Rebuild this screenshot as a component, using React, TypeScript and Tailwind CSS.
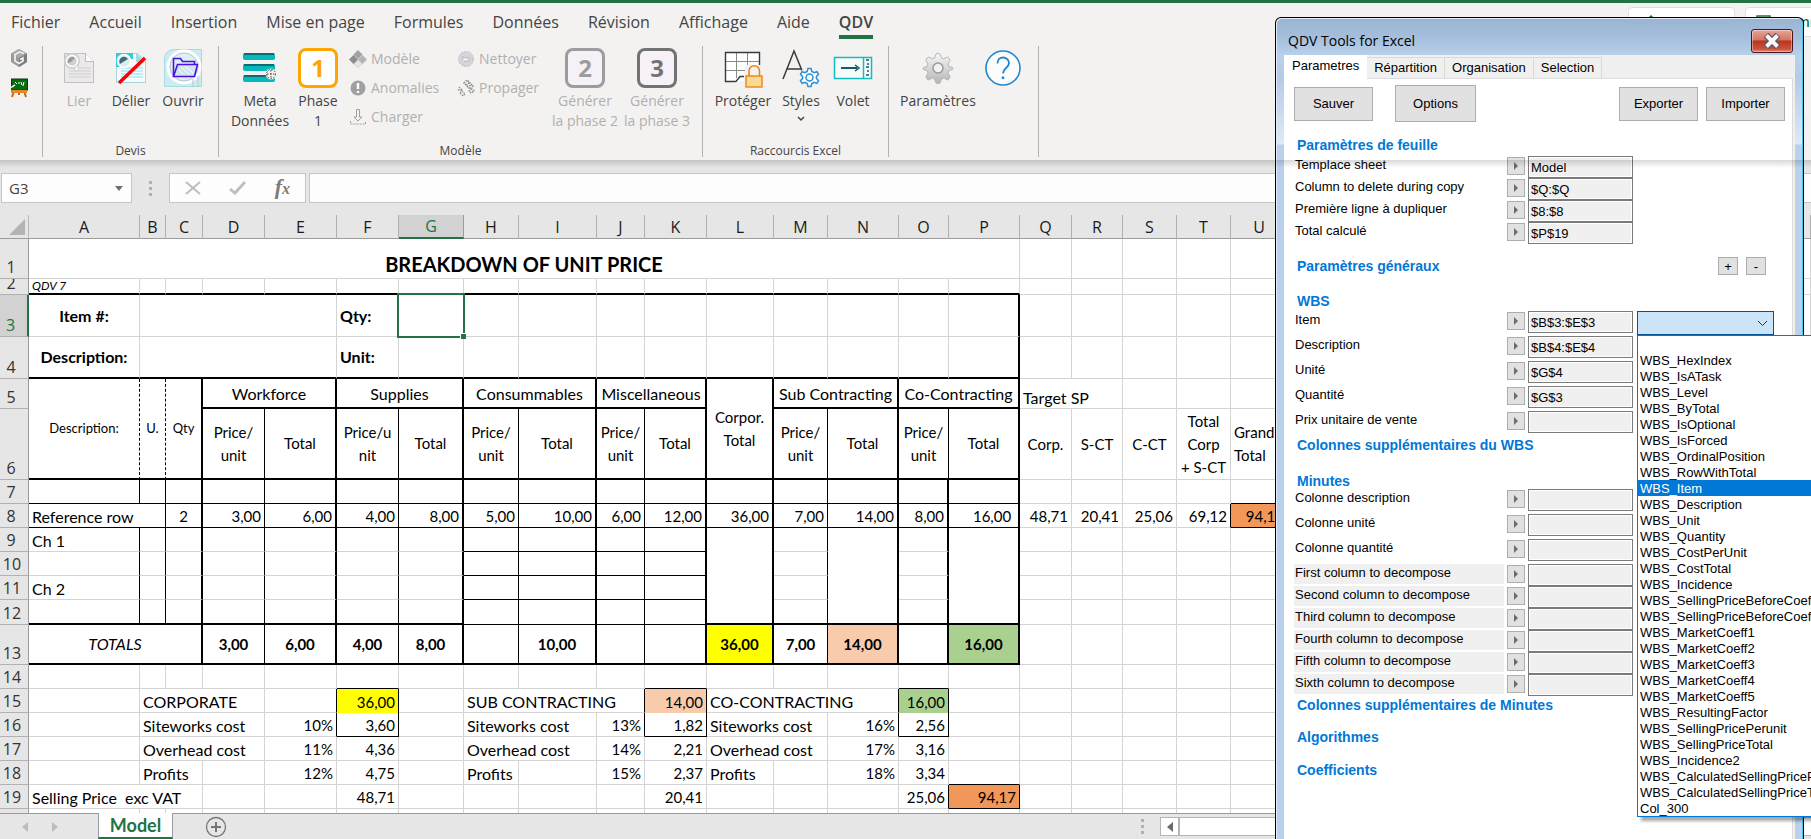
import { useState, type ReactNode } from "react";

/* ---------- icons ---------- */

function CubeIcon() {
  return (
    <svg width="18" height="20" viewBox="0 0 18 20">
      <path d="M9 1l8 4.500v8.500l-8 5-8-5V5.500z" fill="#999999" />
      <path d="M9 1l8 4.500-8 4.500-8-4.500z" fill="#a9a9a9" />
      <path d="M9 10l8-4.500v8.500l-8 5z" fill="#7c7c7c" />
      <path d="M14 5.500L9.500 4 5 6.500v6.500l4 2.500 4-2.500v-3l-3 1.500" fill="none" stroke="#ececec" strokeWidth="1.800" />
    </svg>
  );
}

function BoardIcon() {
  return (
    <svg width="18" height="20" viewBox="0 0 18 20">
      <path d="M4 13l-2 6M14 13l2 6M9 13v4" stroke="#c46a12" strokeWidth="2" />
      <rect x="1.500" y="1" width="16" height="11" fill="#0b6b12" stroke="#053d08" />
      <path d="M5 4l2 2M8 5h2M11 4l1 3M14 4l-1 4" stroke="#fff" strokeWidth="1" />
      <path d="M0 10l5-3" stroke="#e8e8e8" strokeWidth="1.500" />
      <rect x="1" y="12" width="16" height="3" fill="#e28a2b" />
    </svg>
  );
}

function DocIcon({ color, dark, paper }: { color: string; dark: string; paper: string }) {
  return (
    <svg width="34" height="34" viewBox="0 0 34 34">
      <path d="M2.500 2.500h21l8 8v21h-29z" fill={paper} stroke={dark} strokeOpacity=".55" />
      <path d="M23.500 2.500v8h8" fill="#fff" stroke={dark} strokeOpacity=".6" />
      <path d="M7 17h22M7 20h22M7 23h22M7 26h22" stroke={color} strokeWidth="1" />
      <circle cx="10" cy="10" r="8" fill={color} />
      <circle cx="10" cy="10" r="5.500" fill="none" stroke="#fff" strokeWidth="1.500" />
      <path d="M6 12a4.500 4.500 0 0 1 7-5l-4 4z" fill={dark} />
      <path d="M13 15h3v5h-3z" fill="#fff" stroke={color} />
    </svg>
  );
}

function UnlinkIcon() {
  return (
    <svg width="34" height="34" viewBox="0 0 34 34">
      <path d="M2.500 2.500h21l8 8v21h-29z" fill="#f6fbfc" stroke="#a9d4dc" />
      <path d="M2 2h17v6h-6v8H2z" fill="#35cbd9" />
      <path d="M22 2l9 9h-9z" fill="#9fdbe3" />
      <path d="M7 17h22M7 20h22M7 23h22M7 26h22" stroke="#8fdde6" />
      <circle cx="10" cy="10" r="6.500" fill="#d7eef2" stroke="#fff" strokeWidth="1.500" />
      <path d="M6 13a4.500 4.500 0 0 1 8-5l-5 3z" fill="#3d6d78" />
      <path d="M5 32L31 7" stroke="#fb0007" strokeWidth="3.500" />
    </svg>
  );
}

function OpenIcon() {
  return (
    <svg width="40" height="40" viewBox="0 0 40 40">
      <path d="M1.500 10a9 9 0 0 1 9-8.500h28v37h-37z" fill="#cdecef" stroke="#a5dbe1" />
      <circle cx="21" cy="19" r="16" fill="#dfeff3" stroke="#fff" strokeWidth="3" />
      <circle cx="21" cy="19" r="14" fill="none" stroke="#b9c6cf" />
      <path d="M30 31v8M35 28v11" stroke="#b9c6cf" />
      <path d="M10.500 28.500V10.500h7l2 3h12v3" fill="none" stroke="#4a10e8" strokeWidth="1.600" />
      <path d="M10.500 28.500l4-12h20l-3 12z" fill="#cfe5ee" stroke="#4a10e8" strokeWidth="1.600" />
      <path d="M18 19l8 7M22 18l8 7M15 21l5 5" stroke="#fff" />
    </svg>
  );
}

function MetaIcon() {
  return (
    <svg width="36" height="32" viewBox="0 0 36 32">
      {[1, 12, 23].map((y) => (
        <g key={y}>
          <rect x="1" y={y} width="32" height="7" rx="2" fill="#05b8bb" />
          <path d={`M2 ${y + 1}h30`} stroke="#0b6c73" strokeWidth="2" />
        </g>
      ))}
      <circle cx="29" cy="22" r="5.500" fill="#f3f2f1" />
      <circle cx="29" cy="22" r="4.500" fill="none" stroke="#444" strokeDasharray="1.500 1.500" />
      <path d="M25 22h9M29 18v9" stroke="#444" strokeDasharray="1.500 1.500" />
    </svg>
  );
}

function ModelIcon() {
  return (
    <svg width="18" height="18" viewBox="0 0 18 18">
      <path d="M9 0l4.500 4.500L9 9 4.500 4.500z" fill="#a2a2a2" />
      <path d="M4.500 5L9 9.500 4.500 14 0 9.500z" fill="#8d8d8d" />
      <path d="M13.500 5L18 9.500 13.500 14 9 9.500z" fill="#b4b4b4" />
      <path d="M9 10l4 4-4 3.500L5 14z" fill="#e6e6e6" stroke="#bbb" strokeWidth=".5" />
    </svg>
  );
}

function AlertIcon() {
  return (
    <svg width="18" height="18" viewBox="0 0 18 18">
      <circle cx="9" cy="9" r="7.500" fill="#a0a0a0" />
      <path d="M9 4v6M9 12v2" stroke="#fff" strokeWidth="2.400" />
    </svg>
  );
}

function LoadIcon() {
  return (
    <svg width="18" height="18" viewBox="0 0 18 18" fill="none" stroke="#a0a0a0">
      <path d="M7.500 1.500h3V9h2.500l-4 4-4-4h2.500z" />
      <path d="M1.500 13v3h15v-3" strokeDasharray="2 1" />
    </svg>
  );
}

function CleanIcon() {
  return (
    <svg width="18" height="18" viewBox="0 0 18 18">
      <circle cx="9" cy="9" r="7.500" fill="#d8d3da" stroke="#c4bfc6" strokeDasharray="2 1" />
      <path d="M6 10V6.500l2 1.500h4v3H7" fill="#f5f3f6" stroke="#aaa" strokeWidth=".7" />
    </svg>
  );
}

function SpreadIcon() {
  return (
    <svg width="18" height="18" viewBox="0 0 18 18" fill="none" stroke="#8c8c8c" strokeDasharray="1.500 1">
      <path d="M7 4l3-3 6 6-3 3z M9 6l4-3M10 8l4-2" strokeWidth="1.500" />
      <path d="M1 11h5M2 8l3 3M3 14l2-2 3 3-2 2z M12 12l3-2 2 2-3 2z" strokeWidth="1.300" />
    </svg>
  );
}

function NumberIcon({ value, look }: { value: string; look: string }) {
  return (
    <span
      className={`flex h-10 w-10 items-center justify-center rounded-lg border-[3px] font-['Open_Sans',sans-serif] text-2xl leading-none font-bold ${look}`}
    >
      {value}
    </span>
  );
}

function ProtectIcon() {
  return (
    <svg width="40" height="40" viewBox="0 0 40 40">
      <path d="M2.500 4.500h34v28h-17l-5 2-2 .500-4-1h-6z" fill="#fff" />
      <path d="M2 13.500h34M2 22.500h34M13.500 4v26M24.500 4v26" stroke="#8a8a8a" />
      <path d="M36.500 20V4.500h-34v29H13l4-5h6" fill="none" stroke="#3b3b3b" strokeWidth="1.400" />
      <path d="M23 17h16v22H21V27z" fill="#f3f2f1" />
      <path d="M26 28v-5a5 5 0 0 1 10.500 0v5" fill="none" stroke="#e8851a" strokeWidth="1.600" />
      <rect x="23" y="28" width="16" height="11" fill="#f9d98f" stroke="#e8851a" strokeWidth="1.400" />
    </svg>
  );
}

const gearPath =
  "M8.500 1h3l.8 2.900 2.200 1.200 2.900-.9 1.600 2.700-2.100 2.100v2l2.100 2.100-1.600 2.700-2.900-.9-2.200 1.200-.8 2.900h-3l-.8-2.900-2.200-1.200-2.900.9L1 13.100 3.100 11V9L1 6.900l1.600-2.700 2.900.9 2.200-1.200z";

function StylesIcon() {
  return (
    <svg width="40" height="40" viewBox="0 0 40 40">
      <path d="M2 31L13 3l9 22M6 21h14" fill="none" stroke="#3b3b3b" strokeWidth="1.500" />
      <circle cx="28.500" cy="29.500" r="10.500" fill="#f3f2f1" />
      <path transform="translate(18.500 19.500)" d={gearPath} fill="#fff" stroke="#2b8fd6" strokeWidth="1.500" />
      <circle cx="28.500" cy="29.500" r="3.500" fill="#fff" stroke="#2b8fd6" strokeWidth="1.500" />
    </svg>
  );
}

function PaneIcon() {
  return (
    <svg width="40" height="24" viewBox="0 0 40 24" fill="none">
      <rect x="1.500" y="1.500" width="37" height="21" fill="#f7fbfb" stroke="#12bdbd" strokeWidth="1.500" />
      <path d="M30.500 1v22" stroke="#12bdbd" strokeWidth="1.500" />
      <path d="M8 12h16" stroke="#155a66" strokeWidth="2" />
      <path d="M22 9l4 3-4 3" stroke="#155a66" strokeWidth="1.500" />
      <path d="M33 4h3M34 8h2M33 11h3M34 15h2M33 19h3" stroke="#155a66" strokeWidth="1.300" />
    </svg>
  );
}

function SettingsIcon() {
  return (
    <svg width="32" height="32" viewBox="0 0 32 32">
      <defs>
        <linearGradient id="metal" x1="0" y1="0" x2="0" y2="1">
          <stop offset="0" stopColor="#f8f8f8" />
          <stop offset="1" stopColor="#b4b4b4" />
        </linearGradient>
      </defs>
      <path
        d="M14 2l2-1 2 1 1.500 4 2 .8L25.500 5l2 1.500.5 2-2 3.500 1 2.500 3.500 1 .5 1-.5 1-3.500 1-1 2.500 2 3.500-.5 2-2 1.500-3.500-2-2.500 1-1.500 4-2 1-2-1-1.500-4-2.500-1-3.500 2-2-1.500-.5-2 2-3.500-1-2.500-3.500-1-.5-1 .5-1 3.500-1 1-2.500-2-3.500.5-2 2-1.500 4 1.800 2-.8z"
        fill="url(#metal)"
        stroke="#b4b4b4"
      />
      <circle cx="16" cy="16" r="5" fill="#f3f2f1" stroke="#9a9a9a" strokeWidth="1.500" />
    </svg>
  );
}

function HelpIcon() {
  return (
    <svg width="38" height="38" viewBox="0 0 38 38" fill="none" stroke="#1f86d0">
      <circle cx="19" cy="19" r="17" fill="#fcfcfc" strokeWidth="1.600" />
      <path d="M13.500 14.500c0-4 2.500-6 5.500-6s6 2 6 5.500c0 5-6 5-6 10.500" strokeWidth="1.800" />
      <path d="M19 27.500v2.500" strokeWidth="2.500" />
    </svg>
  );
}

/* ---------- ribbon ---------- */

const menu = [
  "Fichier",
  "Accueil",
  "Insertion",
  "Mise en page",
  "Formules",
  "Données",
  "Révision",
  "Affichage",
  "Aide",
  "QDV"
];

type BigButtonProps = {
  icon: ReactNode;
  label?: string;
  width: string;
  off?: boolean;
  children?: ReactNode;
};

function BigButton({ icon, label = "Aide QDV", width, off, children }: BigButtonProps) {
  return (
    <button
      type="button"
      aria-label={label}
      disabled={off}
      className={`flex flex-col items-center gap-[3px] pt-0.5 text-sm leading-5 whitespace-pre ${width} ${
        off ? "text-[#b1b0af]" : "text-[#444444]"
      }`}
    >
      <span className="flex h-10 items-center justify-center">{icon}</span>
      {children}
    </button>
  );
}

function SmallButton({ icon, label }: { icon: ReactNode; label: string }) {
  return (
    <button
      type="button"
      disabled
      className="flex h-[29px] items-center gap-1 pb-1 text-sm whitespace-nowrap text-[#b1b0af]"
    >
      {icon}
      {label}
    </button>
  );
}

function Group({ label, width, children }: { label?: string; width: string; children: ReactNode }) {
  return (
    <div className={`flex h-[111px] shrink-0 flex-col border-r border-[#b5b3b1] ${width}`}>
      <div className="flex flex-1">{children}</div>
      <div className="text-center text-xs leading-3 text-[#444444]">{label}</div>
    </div>
  );
}

function Ribbon() {
  return (
    <header className="border-t-[3px] border-[#217346] bg-[#f3f2f1] font-['Open_Sans','Noto_Sans',sans-serif]">
      <div className="flex h-[37px] pl-[11px]">
        <nav className="flex shrink-0 gap-[29px]">
          {menu.map((item) => (
            <button
              key={item}
              type="button"
              className={`h-9 border-b-4 pt-1.5 text-base leading-[26px] whitespace-nowrap text-[#444444] ${
                item === "QDV" ? "border-[#217346] font-semibold" : "border-transparent"
              }`}
            >
              {item}
            </button>
          ))}
        </nav>
        <div className="ml-auto flex w-[183px] shrink-0 gap-2.5 overflow-hidden pt-1 text-sm font-semibold text-[#217346]">
          <button
            type="button"
            className="flex h-[30px] w-[107px] shrink-0 items-center gap-2 rounded-sm border border-[#e1dfdd] bg-white pl-4"
          >
            <svg width="12" height="14" viewBox="0 0 12 14" fill="none" stroke="#217346" strokeWidth="1.500">
              <path d="M6 1v8M3 4l3-3 3 3M1 8v5h10V8" />
            </svg>
            Partager
          </button>
          <button
            type="button"
            className="flex h-[30px] w-[150px] shrink-0 items-center gap-2 rounded-sm border border-[#e1dfdd] bg-white pl-2.5"
          >
            <svg width="15" height="14" viewBox="0 0 15 14" fill="none" stroke="#217346" strokeWidth="1.500">
              <path d="M1 1h13v9H7l-3 3v-3H1z" />
            </svg>
            Commentaires
          </button>
        </div>
      </div>

      <div className="flex h-[120px] overflow-hidden pt-1.5">
        <Group width="w-[43px]">
          <div className="flex flex-col gap-2.5 pt-0.5 pl-2.5">
            <button type="button" aria-label="Objet">
              <CubeIcon />
            </button>
            <button type="button" aria-label="Tableau">
              <BoardIcon />
            </button>
          </div>
        </Group>

        <Group label="Devis" width="w-[176px]">
          <div className="flex pl-2.5">
            <BigButton label="Lier" width="w-[52px]" off icon={<DocIcon color="#cfcfcf" dark="#9a9a9a" paper="#ece9ec" />}>
              Lier
            </BigButton>
            <BigButton label="Délier" width="w-[52px]" icon={<UnlinkIcon />}>
              Délier
            </BigButton>
            <BigButton label="Ouvrir" width="w-[52px]" icon={<OpenIcon />}>
              Ouvrir
            </BigButton>
          </div>
        </Group>

        <Group label="Modèle" width="w-[484px]">
          <div className="flex pl-2.5">
            <BigButton label="Meta Données" width="w-[62px]" icon={<MetaIcon />}>
              {"Meta\nDonnées"}
            </BigButton>
            <BigButton
              label="Phase 1"
              width="w-[54px]"
              icon={<NumberIcon value="1" look="border-[#ffa500] bg-white text-[#ffa500]" />}
            >
              {"Phase\n1"}
            </BigButton>
            <div className="w-[112px] pl-1">
              <SmallButton icon={<ModelIcon />} label="Modèle" />
              <SmallButton icon={<AlertIcon />} label="Anomalies" />
              <SmallButton icon={<LoadIcon />} label="Charger" />
            </div>
            <div className="w-[92px]">
              <SmallButton icon={<CleanIcon />} label="Nettoyer" />
              <SmallButton icon={<SpreadIcon />} label="Propager" />
            </div>
            <BigButton
              label="Générer la phase 2"
              width="w-[72px]"
              off
              icon={<NumberIcon value="2" look="border-[#9d9b9e] bg-[#f5f1f7] text-[#9d9b9e]" />}
            >
              {"Générer\nla phase 2"}
            </BigButton>
            <BigButton
              label="Générer la phase 3"
              width="w-[72px]"
              off
              icon={<NumberIcon value="3" look="border-[#737373] bg-[#f5f1f7] text-[#737373]" />}
            >
              {"Générer\nla phase 3"}
            </BigButton>
          </div>
        </Group>

        <Group label="Raccourcis Excel" width="w-[186px]">
          <div className="flex pl-[7px]">
            <BigButton label="Protéger" width="w-[66px]" icon={<ProtectIcon />}>
              Protéger
            </BigButton>
            <BigButton label="Styles" width="w-[50px]" icon={<StylesIcon />}>
              Styles
              <svg width="10" height="10" viewBox="0 0 10 10" fill="none" stroke="#444" strokeWidth="1.500">
                <path d="M2 3l3 3 3-3" />
              </svg>
            </BigButton>
            <BigButton label="Volet" width="w-[54px]" icon={<PaneIcon />}>
              Volet
            </BigButton>
          </div>
        </Group>

        <Group width="w-[150px]">
          <div className="flex pl-[7px]">
            <BigButton label="Paramètres" width="w-[84px]" icon={<SettingsIcon />}>
              Paramètres
            </BigButton>
            <BigButton width="w-[46px]" icon={<HelpIcon />} />
          </div>
        </Group>
      </div>
    </header>
  );
}

function Dots() {
  return (
    <span className="flex flex-col gap-[3px]">
      <i className="h-[3px] w-[3px] bg-[#b0b0b0]" />
      <i className="h-[3px] w-[3px] bg-[#b0b0b0]" />
      <i className="h-[3px] w-[3px] bg-[#b0b0b0]" />
    </span>
  );
}

function FormulaBar() {
  return (
    <div className="flex h-[55px] shrink-0 items-start pt-[13px] pl-px">
      <div className="flex h-[30px] w-[131px] shrink-0 items-center border border-[#c6c6c6] bg-[#fdfdfd] pr-2 pl-[7px]">
        <input
          aria-label="Zone Nom"
          defaultValue="G3"
          className="w-full min-w-0 bg-transparent font-['Open_Sans',sans-serif] text-[15px] text-[#444444] outline-none"
        />
        <svg width="8" height="5" viewBox="0 0 8 5" className="shrink-0">
          <path d="M0 0h8L4 5z" fill="#6e6e6e" />
        </svg>
      </div>
      <div className="flex h-[30px] w-[37px] shrink-0 items-center justify-center">
        <Dots />
      </div>
      <div className="flex h-[30px] w-[137px] shrink-0 items-center justify-between border border-[#c6c6c6] bg-[#fdfdfd] px-[15px]">
        <button type="button" aria-label="Annuler">
          <svg width="16" height="14" viewBox="0 0 16 14" fill="none" stroke="#bdbdbd" strokeWidth="2">
            <path d="M1 1l14 12M15 1L1 13" />
          </svg>
        </button>
        <button type="button" aria-label="Entrer">
          <svg width="17" height="14" viewBox="0 0 17 14" fill="none" stroke="#bdbdbd" strokeWidth="2.800">
            <path d="M1 8l5 4L16 1" />
          </svg>
        </button>
        <button
          type="button"
          className="font-['Liberation_Serif',serif] text-[22px] leading-6 font-bold text-[#7a7a7a] italic"
        >
          f<span className="text-base">x</span>
        </button>
      </div>
      <input
        aria-label="Barre de formule"
        className="ml-[3px] h-[30px] min-w-0 flex-1 border border-r-0 border-[#c6c6c6] bg-[#fdfdfd] px-2 outline-none"
      />
    </div>
  );
}

/* ---------- sheet ---------- */

const columns: [string, string][] = [
  ["A", "w-[111px]"],
  ["B", "w-[26px]"],
  ["C", "w-[37px]"],
  ["D", "w-[62px]"],
  ["E", "w-[72px]"],
  ["F", "w-[62px]"],
  ["G", "w-[65px]"],
  ["H", "w-[55px]"],
  ["I", "w-[78px]"],
  ["J", "w-[48px]"],
  ["K", "w-[62px]"],
  ["L", "w-[67px]"],
  ["M", "w-[54px]"],
  ["N", "w-[71px]"],
  ["O", "w-[50px]"],
  ["P", "w-[71px]"],
  ["Q", "w-[52px]"],
  ["R", "w-[51px]"],
  ["S", "w-[54px]"],
  ["T", "w-[54px]"],
  ["U", "w-[57px]"],
  ["V", ""]
];

// edge codes: g grid line, k thin black, K thick black, d dashed, n none
const rightEdge: Record<string, string> = {
  g: "border-r border-r-[#d4d4d4]",
  k: "border-r border-r-black",
  K: "border-r-2 border-r-black",
  d: "border-r border-r-black [border-right-style:dashed]",
  n: ""
};

const bottomEdge: Record<string, string> = {
  g: "border-b border-b-[#d4d4d4]",
  k: "border-b border-b-black",
  K: "border-b-2 border-b-black",
  n: ""
};

const L = "text-left align-bottom text-base leading-[21px]";
const R = "text-right align-bottom";
const C = "text-center align-middle text-base leading-[21px]";
const CB = "text-center align-middle font-bold";
const TITLE = "text-center align-middle text-base font-bold";
const HEAD = "text-center align-middle leading-[23px]";
const SMALL = "text-center align-middle text-[13px]";
const YELLOW = "bg-[#ffff00]";
const PEACH = "bg-[#f8cbad]";
const GREEN = "bg-[#a9d08e]";
const ORANGE = "bg-[#f19759]";

type Cell = { text: string; edges: string; look: string; span: number; rows: number };

const cell = (text = "", edges = "gg", look = L, span = 1, rows = 1): Cell => ({
  text,
  edges,
  look,
  span,
  rows
});

const blanks = (count: number, edges = "gg") => Array.from({ length: count }, () => cell("", edges));

const bodyEdges = ["k", "k", "K", "k", "K", "k", "K", "k", "K", "k", "K", "K", "k", "K", "K", "K"];

// rows 9-12: only some columns keep their horizontal lines
const bodyRow = (label: string, last = false) => [
  ...bodyEdges.map((right, i) => {
    const boxed = i >= 7 && i <= 10;
    const merged = i === 11 || i === 13 || i === 15;
    const bottom = boxed ? "k" : last ? "K" : merged ? "n" : "g";
    return cell(i === 0 ? label : "", right + bottom);
  }),
  ...blanks(6)
];

const costRow = (label: string, e: string, f: string, j: string, k: string, n: string, o: string, box = false) => [
  cell(),
  cell(label, "gg", L, 3),
  cell(e, box ? "kg" : "gg", R),
  cell(f, box ? "kk" : "gg", R),
  cell(),
  cell(label, "gg", L, 2),
  cell(j, box ? "kg" : "gg", R),
  cell(k, box ? "kk" : "gg", R),
  cell(label, "gg", L, 2),
  cell(n, box ? "kg" : "gg", R),
  cell(o, box ? "kk" : "gg", R),
  ...blanks(7)
];

const rows: { height: string; cells: Cell[] }[] = [
  {
    height: "h-[40px]",
    cells: [cell("BREAKDOWN OF UNIT PRICE", "gg", "text-center align-bottom text-xl leading-7 font-bold", 16), ...blanks(6)]
  },
  {
    height: "h-[16px]",
    cells: [
      cell("QDV 7", "gK", "text-left align-top text-xs leading-[13px] italic"),
      ...blanks(15, "gK"),
      ...blanks(6)
    ]
  },
  {
    height: "h-[42px]",
    cells: [
      cell("Item #:", "gg", TITLE),
      cell("", "gg", L, 4),
      cell("Qty:", "gg", "text-left align-middle text-base font-bold"),
      cell("", "gg", "selected"),
      ...blanks(8),
      cell("", "Kg"),
      ...blanks(6)
    ]
  },
  {
    height: "h-[42px]",
    cells: [
      cell("Description:", "gK", TITLE),
      cell("", "gK", L, 4),
      cell("Unit:", "gK", "text-left align-middle text-base font-bold"),
      ...blanks(9, "gK"),
      cell("", "KK"),
      ...blanks(6)
    ]
  },
  {
    height: "h-[30px]",
    cells: [
      cell("Description:", "dK", SMALL, 1, 2),
      cell("U.", "dK", SMALL, 1, 2),
      cell("Qty", "KK", SMALL, 1, 2),
      cell("Workforce", "KK", C, 2),
      cell("Supplies", "KK", C, 2),
      cell("Consummables", "KK", C, 2),
      cell("Miscellaneous", "KK", C, 2),
      cell("Corpor.\nTotal", "KK", HEAD, 1, 2),
      cell("Sub Contracting", "KK", C, 2),
      cell("Co-Contracting", "KK", C, 2),
      cell("Target SP", "gg", L, 2),
      ...blanks(4)
    ]
  },
  {
    height: "h-[71px]",
    cells: [
      cell("Price/\nunit", "kK", HEAD),
      cell("Total", "KK", HEAD),
      cell("Price/u\nnit", "kK", HEAD),
      cell("Total", "KK", HEAD),
      cell("Price/\nunit", "kK", HEAD),
      cell("Total", "KK", HEAD),
      cell("Price/\nunit", "kK", HEAD),
      cell("Total", "KK", HEAD),
      cell("Price/\nunit", "kK", HEAD),
      cell("Total", "KK", HEAD),
      cell("Price/\nunit", "kK", HEAD),
      cell("Total", "KK", HEAD),
      cell("Corp.", "gg", HEAD),
      cell("S-CT", "gg", HEAD),
      cell("C-CT", "gg", HEAD),
      cell("Total\nCorp\n+ S-CT", "gg", HEAD),
      cell("Grand\nTotal", "gg", "text-left align-middle leading-[23px]"),
      cell()
    ]
  },
  {
    height: "h-[24px]",
    cells: [...bodyEdges.map((right) => cell("", right + "k")), ...blanks(4), cell("", "gk"), cell()]
  },
  {
    height: "h-[24px]",
    cells: [
      cell("Reference row", "kk", L, 2),
      cell("2", "Kk", "text-center align-bottom"),
      cell("3,00", "kk", R),
      cell("6,00", "Kk", R),
      cell("4,00", "kk", R),
      cell("8,00", "Kk", R),
      cell("5,00", "kk", R),
      cell("10,00", "Kk", R),
      cell("6,00", "kk", R),
      cell("12,00", "Kk", R),
      cell("36,00", "Kk", R),
      cell("7,00", "kk", R),
      cell("14,00", "Kk", R),
      cell("8,00", "Kk", R),
      cell("16,00 ", "Kk", R),
      cell("48,71", "gg", R),
      cell("20,41", "gg", R),
      cell("25,06", "gg", R),
      cell("69,12", "kg", R),
      cell("94,17", "kk", `${R} ${ORANGE}`),
      cell()
    ]
  },
  { height: "h-[24px]", cells: bodyRow("Ch 1") },
  { height: "h-[24px]", cells: bodyRow("") },
  { height: "h-[24px]", cells: bodyRow("Ch 2") },
  { height: "h-[25px]", cells: bodyRow("", true) },
  {
    height: "h-[40px]",
    cells: [
      cell("TOTALS", "KK", "text-center align-middle text-base italic", 3),
      cell("3,00", "kK", CB),
      cell("6,00", "KK", CB),
      cell("4,00", "kK", CB),
      cell("8,00", "KK", CB),
      cell("", "kK"),
      cell("10,00", "KK", CB),
      cell("", "kK"),
      cell("", "KK"),
      cell("36,00", "KK", `${CB} ${YELLOW}`),
      cell("7,00", "kK", CB),
      cell("14,00", "KK", `${CB} ${PEACH}`),
      cell("", "KK"),
      cell("16,00", "KK", `${CB} ${GREEN}`),
      ...blanks(6)
    ]
  },
  {
    height: "h-[24px]",
    cells: [
      ...blanks(5),
      cell("", "gk"),
      ...blanks(4),
      cell("", "gk"),
      ...blanks(3),
      cell("", "gk"),
      ...blanks(7)
    ]
  },
  {
    height: "h-[24px]",
    cells: [
      cell(),
      cell("CORPORATE", "gg", L, 3),
      cell("", "kg"),
      cell("36,00", "kn", `${R} ${YELLOW}`),
      cell(),
      cell("SUB CONTRACTING", "kg", L, 3),
      cell("14,00", "kn", `${R} ${PEACH}`),
      cell("CO-CONTRACTING", "kg", L, 3),
      cell("16,00", "kn", `${R} ${GREEN}`),
      ...blanks(7)
    ]
  },
  { height: "h-[24px]", cells: costRow("Siteworks cost", "10%", "3,60", "13%", "1,82", "16%", "2,56", true) },
  { height: "h-[24px]", cells: costRow("Overhead cost", "11%", "4,36", "14%", "2,21", "17%", "3,16") },
  {
    height: "h-[24px]",
    cells: [
      cell(),
      cell("Profits", "gg", L, 2),
      cell(),
      cell("12%", "gg", R),
      cell("4,75", "gg", R),
      cell(),
      cell("Profits"),
      cell(),
      cell("15%", "gg", R),
      cell("2,37", "gg", R),
      cell("Profits"),
      cell(),
      cell("18%", "gg", R),
      cell("3,34", "gg", R),
      cell("", "gk"),
      ...blanks(6)
    ]
  },
  {
    height: "h-[24px]",
    cells: [
      cell("Selling Price  exc VAT", "gg", L, 3),
      ...blanks(2),
      cell("48,71", "gg", R),
      ...blanks(4),
      cell("20,41", "gg", R),
      ...blanks(3),
      cell("25,06", "kg", R),
      cell("94,17", "kk", `${R} ${ORANGE}`),
      ...blanks(6)
    ]
  },
  { height: "h-[24px]", cells: blanks(22) }
];

function SheetCell({ data }: { data: Cell }) {
  const { text, edges, look, span, rows: rowSpan } = data;

  return (
    <td
      colSpan={span}
      rowSpan={rowSpan}
      className={`p-0 whitespace-pre ${look === "selected" ? "relative" : look} ${rightEdge[edges[0]]} ${bottomEdge[edges[1]]}`}
    >
      {text && <div className="px-[3px]">{text}</div>}
      {look === "selected" && (
        <div className="absolute -inset-0.5 border-2 border-[#217346]">
          <i className="absolute -right-[3px] -bottom-[3px] h-1.5 w-1.5 border-t border-l border-white bg-[#217346]" />
        </div>
      )}
    </td>
  );
}

function Sheet() {
  return (
    <main className="min-h-0 flex-1 overflow-hidden bg-white">
      <table className="w-full table-fixed border-separate border-spacing-0 font-['Lato',sans-serif] text-[15px] leading-[21px] text-black">
        <colgroup>
          <col className="w-[29px]" />
          {columns.map(([name, width]) => (
            <col key={name} className={width} />
          ))}
        </colgroup>
        <thead>
          <tr className="h-[24px] bg-[#e6e6e6] font-['Open_Sans',sans-serif] text-base">
            <th className="border-r border-b border-r-[#b8b8b8] border-b-[#9b9b9b] p-0 align-bottom">
              <svg width="16" height="16" viewBox="0 0 16 16" className="mb-[3px] ml-[9px]">
                <path d="M16 0v16H0z" fill="#b4b4b4" />
              </svg>
            </th>
            {columns.map(([name]) => (
              <th
                key={name}
                scope="col"
                className={`overflow-hidden p-0 leading-[22px] font-normal ${
                  name === "G"
                    ? "border-r border-b-2 border-r-[#9b9b9b] border-b-[#217346] bg-[#d2d2d2] text-[#217346]"
                    : "border-r border-b border-r-[#b1b1b1] border-b-[#9b9b9b] text-[#1a1a1a]"
                }`}
              >
                {name}
              </th>
            ))}
          </tr>
        </thead>
        <tbody>
          {rows.map((row, i) => (
            <tr key={i} className={row.height}>
              <th
                scope="row"
                className={`border-b border-b-[#b1b1b1] p-0 align-bottom font-['Open_Sans',sans-serif] text-base leading-[22px] font-normal ${
                  i === 2
                    ? "border-r-2 border-r-[#217346] bg-[#d2d2d2] text-[#217346]"
                    : "border-r border-r-[#9b9b9b] bg-[#e6e6e6] text-[#333333]"
                } ${i > 8 ? "pr-1" : "pr-1.5"}`}
              >
                {i === 1 ? <div className="flex h-[15px] items-end justify-center overflow-hidden">2</div> : i + 1}
              </th>
              {row.cells.map((data, j) => (
                <SheetCell key={j} data={data} />
              ))}
            </tr>
          ))}
        </tbody>
      </table>
    </main>
  );
}

function SheetTabs() {
  return (
    <footer className="flex h-[26px] shrink-0 border-t border-[#9b9b9b]">
      <div className="flex w-[98px] shrink-0 items-center gap-6 pl-[22px]">
        <button type="button" aria-label="Feuille précédente">
          <svg width="6" height="10" viewBox="0 0 6 10">
            <path d="M6 0v10L0 5z" fill="#bdbdbd" />
          </svg>
        </button>
        <button type="button" aria-label="Feuille suivante">
          <svg width="6" height="10" viewBox="0 0 6 10">
            <path d="M0 0v10l6-5z" fill="#bdbdbd" />
          </svg>
        </button>
      </div>
      <button
        type="button"
        className="-mt-px h-[26px] w-[75px] shrink-0 border-x border-b-2 border-x-[#9b9b9b] border-b-[#217346] bg-white font-['Lato',sans-serif] text-lg leading-5 font-bold text-[#217346]"
      >
        Model
      </button>
      <button type="button" aria-label="Nouvelle feuille" className="ml-8">
        <svg width="22" height="22" viewBox="0 0 22 22" fill="none" stroke="#777">
          <circle cx="11" cy="11" r="9.500" strokeWidth="1.300" />
          <path d="M11 6v10M6 11h10" strokeWidth="2" />
        </svg>
      </button>
      <div className="ml-auto flex w-[670px] shrink-0 items-center">
        <Dots />
        <div className="ml-4 flex h-[19px] flex-1 border border-r-0 border-[#b5b5b5] bg-white">
          <button
            type="button"
            aria-label="Défiler à gauche"
            className="flex w-[19px] items-center justify-center border-r-2 border-[#b5b5b5]"
          >
            <svg width="6" height="10" viewBox="0 0 6 10">
              <path d="M6 0v10L0 5z" fill="#6a6a6a" />
            </svg>
          </button>
        </div>
      </div>
    </footer>
  );
}

/* ---------- tools dialog ---------- */

const dialogTabs = ["Parametres", "Répartition", "Organisation", "Selection"];

const fieldNames = [
  "",
  "WBS_HexIndex",
  "WBS_IsATask",
  "WBS_Level",
  "WBS_ByTotal",
  "WBS_IsOptional",
  "WBS_IsForced",
  "WBS_OrdinalPosition",
  "WBS_RowWithTotal",
  "WBS_Item",
  "WBS_Description",
  "WBS_Unit",
  "WBS_Quantity",
  "WBS_CostPerUnit",
  "WBS_CostTotal",
  "WBS_Incidence",
  "WBS_SellingPriceBeforeCoeff1",
  "WBS_SellingPriceBeforeCoeff2",
  "WBS_MarketCoeff1",
  "WBS_MarketCoeff2",
  "WBS_MarketCoeff3",
  "WBS_MarketCoeff4",
  "WBS_MarketCoeff5",
  "WBS_ResultingFactor",
  "WBS_SellingPricePerunit",
  "WBS_SellingPriceTotal",
  "WBS_Incidence2",
  "WBS_CalculatedSellingPricePerUnit",
  "WBS_CalculatedSellingPriceTotal",
  "Col_300"
];

function FieldPicker() {
  const [active, setActive] = useState("WBS_Item");

  return (
    <div className="relative ml-px h-6 w-[137px] shrink-0">
      <select
        aria-label="Champ WBS"
        className="h-6 w-full appearance-none border border-[#005499] bg-[#cce4f7] px-1 outline-none"
      >
        <option value=""></option>
      </select>
      <svg
        width="11"
        height="7"
        viewBox="0 0 11 7"
        fill="none"
        stroke="#333"
        className="pointer-events-none absolute top-[9px] right-1.5"
      >
        <path d="M1 1l4.500 4.500L10 1" />
      </svg>
      <ul
        role="listbox"
        aria-label="Champs disponibles"
        className="absolute top-full left-0 w-[220px] border border-[#0078d7] bg-white shadow-[4px_4px_3px_rgba(0,0,0,0.35)]"
      >
        {fieldNames.map((name) => (
          <li
            key={name}
            role="option"
            aria-selected={name === active}
            onMouseEnter={() => setActive(name)}
            className={`h-4 pl-0.5 leading-[17px] whitespace-nowrap ${
              name === active ? "bg-[#0078d7] text-white" : "text-black"
            }`}
          >
            {name}
          </li>
        ))}
      </ul>
    </div>
  );
}

type FieldProps = { label: string; value?: string; shaded?: boolean; children?: ReactNode };

function Field({ label, value = "", shaded, children }: FieldProps) {
  const id = label.toLowerCase().replaceAll(" ", "-");

  return (
    <div className="flex h-[22px] items-start gap-[3px]">
      <label htmlFor={id} className={`h-5 w-[210px] pl-px leading-[18px] ${shaded ? "bg-[#f0f0f0]" : ""}`}>
        {label}
      </label>
      <button
        type="button"
        aria-label={`Choisir ${label}`}
        className="mt-px flex h-[18px] w-[18px] items-center justify-center border border-[#adadad] bg-[#e1e1e1]"
      >
        <svg width="4" height="8" viewBox="0 0 4 8">
          <path d="M0 0l4 4-4 4z" fill="#6d6d6d" />
        </svg>
      </button>
      <input
        id={id}
        defaultValue={value}
        className="h-[22px] w-[105px] border border-[#7a7a7a] bg-[#f0f0f0] px-0.5 shadow-[inset_0_0_0_1px_#ffffff] outline-none"
      />
      {children}
    </div>
  );
}

function Heading({ gap, children }: { gap: string; children: ReactNode }) {
  return <h2 className={`pl-[3px] text-sm leading-4 font-bold text-[#0078d7] ${gap}`}>{children}</h2>;
}

function ToolButton({ size, children }: { size: string; children: ReactNode }) {
  return (
    <button type="button" className={`border border-[#adadad] bg-[#e1e1e1] ${size}`}>
      {children}
    </button>
  );
}

function ToolsDialog() {
  const [tab, setTab] = useState("Parametres");

  return (
    <section
      role="dialog"
      aria-label="QDV Tools for Excel"
      className="absolute top-[17px] right-[7px] bottom-0 z-20 flex w-[529px] flex-col rounded-t-md border border-b-0 border-black bg-[linear-gradient(#9ab4d2,#a4bddb_18px,#b9d1ea_38px,#b4cbe6_60px,#dfe9f6_126px,#b9d1ea_127px)] px-2 font-['Liberation_Sans',sans-serif] text-[13px] text-black shadow-[inset_-1px_0_0_#43c9ee,inset_1px_1px_0_#e3edf8]"
    >
      <div className="flex h-[37px] shrink-0 items-center justify-between pt-2 pr-0.5 pl-1">
        <h1 className="font-['Open_Sans',sans-serif] text-sm">QDV Tools for Excel</h1>
        <button
          type="button"
          aria-label="Fermer"
          className="flex h-6 w-[42px] items-center justify-center rounded-[3px] border border-[#4a1420] bg-[linear-gradient(#e6a596,#d67563_45%,#b8351c_50%,#c9523a_85%,#dd8a70)] shadow-[inset_0_0_0_1px_rgba(255,255,255,0.4)]"
        >
          <svg width="18" height="16" viewBox="0 0 18 16">
            <path d="M3 2l12 12M15 2l-12 12" stroke="#535666" strokeWidth="6.500" />
            <path d="M3.500 2.500l11 11M14.500 2.500l-11 11" stroke="#f7f7f7" strokeWidth="4" />
          </svg>
        </button>
      </div>

      <div className="flex min-h-0 flex-1 flex-col bg-[#f0f0f0] pr-0.5">
        <div className="flex h-[23px] shrink-0 items-end">
          {dialogTabs.map((name) => (
            <button
              key={name}
              type="button"
              onClick={() => setTab(name)}
              className={
                name === tab
                  ? "z-10 -mb-px h-6 bg-white px-2 pb-0.5"
                  : "h-[21px] border-t border-r border-[#d9d9d9] px-[7px]"
              }
            >
              {name}
            </button>
          ))}
        </div>

        <div className="flex-1 border-t border-r border-[#dcdcdc] bg-white pt-1.5 pr-[7px] pl-2.5">
          <div className="flex items-center">
            <ToolButton size="h-[34px] w-[79px]">Sauver</ToolButton>
            <ToolButton size="ml-[22px] h-[37px] w-[81px]">Options</ToolButton>
            <ToolButton size="ml-auto h-[34px] w-[79px]">Exporter</ToolButton>
            <ToolButton size="ml-2 h-[34px] w-[79px]">Importer</ToolButton>
          </div>

          <Heading gap="mt-[15px] mb-[3px]">Paramètres de feuille</Heading>
          <Field label="Templace sheet" value="Model" />
          <Field label="Column to delete during copy" value="$Q:$Q" />
          <Field label="Première ligne à dupliquer" value="$8:$8" />
          <Field label="Total calculé" value="$P$19" />

          <div className="mt-[13px] flex items-center justify-between pr-[19px]">
            <Heading gap="">Paramètres généraux</Heading>
            <div className="flex gap-2">
              <ToolButton size="h-[18px] w-5 leading-none">+</ToolButton>
              <ToolButton size="h-[18px] w-5 leading-none">-</ToolButton>
            </div>
          </div>

          <Heading gap="mt-[18px] mb-0.5">WBS</Heading>
          <div className="flex flex-col gap-[3px]">
            <Field label="Item" value="$B$3:$E$3">
              <FieldPicker />
            </Field>
            <Field label="Description" value="$B$4:$E$4" />
            <Field label="Unité" value="$G$4" />
            <Field label="Quantité" value="$G$3" />
            <Field label="Prix unitaire de vente" />
          </div>
          <Heading gap="mt-1">Colonnes supplémentaires du WBS</Heading>

          <Heading gap="mt-5">Minutes</Heading>
          <div className="flex flex-col gap-[3px]">
            <Field label="Colonne description" />
            <Field label="Colonne unité" />
            <Field label="Colonne quantité" />
          </div>
          <div className="mt-[3px]">
            <Field label="First column to decompose" shaded />
            <Field label="Second column to decompose" shaded />
            <Field label="Third column to decompose" shaded />
            <Field label="Fourth column to decompose" shaded />
            <Field label="Fifth column to decompose" shaded />
            <Field label="Sixth column to decompose" shaded />
          </div>
          <Heading gap="mt-px">Colonnes supplémentaires de Minutes</Heading>
          <Heading gap="mt-4">Algorithmes</Heading>
          <Heading gap="mt-[17px]">Coefficients</Heading>
        </div>
      </div>
    </section>
  );
}

export default function App() {
  return (
    <div className="relative flex h-screen flex-col overflow-hidden bg-[#e6e6e6]">
      <Ribbon />
      <div className="pointer-events-none z-30 -mb-2 h-2 shrink-0 bg-linear-to-b from-black/15 to-transparent" />
      <FormulaBar />
      <Sheet />
      <SheetTabs />
      <ToolsDialog />
    </div>
  );
}
